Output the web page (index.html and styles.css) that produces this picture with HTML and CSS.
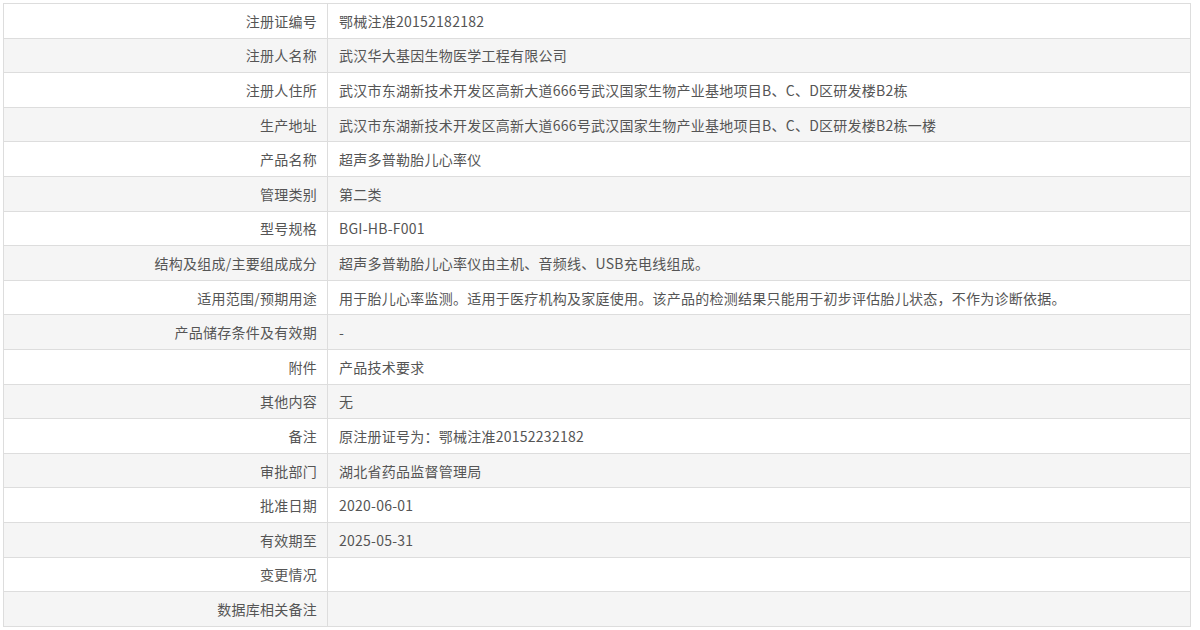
FILE: index.html
```html
<!DOCTYPE html>
<html lang="zh-CN">
<head>
<meta charset="utf-8">
<link rel="stylesheet" href="styles.css">
</head>
<body>
<table class="info">
<tbody>
<tr><td class="lbl">注册证编号</td><td class="val">鄂械注准20152182182</td></tr>
<tr><td class="lbl">注册人名称</td><td class="val">武汉华大基因生物医学工程有限公司</td></tr>
<tr><td class="lbl">注册人住所</td><td class="val">武汉市东湖新技术开发区高新大道666号武汉国家生物产业基地项目B、C、D区研发楼B2栋</td></tr>
<tr><td class="lbl">生产地址</td><td class="val">武汉市东湖新技术开发区高新大道666号武汉国家生物产业基地项目B、C、D区研发楼B2栋一楼</td></tr>
<tr><td class="lbl">产品名称</td><td class="val">超声多普勒胎儿心率仪</td></tr>
<tr><td class="lbl">管理类别</td><td class="val">第二类</td></tr>
<tr><td class="lbl">型号规格</td><td class="val">BGI-HB-F001</td></tr>
<tr><td class="lbl">结构及组成/主要组成成分</td><td class="val">超声多普勒胎儿心率仪由主机、音频线、USB充电线组成。</td></tr>
<tr><td class="lbl">适用范围/预期用途</td><td class="val">用于胎儿心率监测。适用于医疗机构及家庭使用。该产品的检测结果只能用于初步评估胎儿状态，不作为诊断依据。</td></tr>
<tr><td class="lbl">产品储存条件及有效期</td><td class="val">-</td></tr>
<tr><td class="lbl">附件</td><td class="val">产品技术要求</td></tr>
<tr><td class="lbl">其他内容</td><td class="val">无</td></tr>
<tr><td class="lbl">备注</td><td class="val">原注册证号为：鄂械注准20152232182</td></tr>
<tr><td class="lbl">审批部门</td><td class="val">湖北省药品监督管理局</td></tr>
<tr><td class="lbl">批准日期</td><td class="val">2020-06-01</td></tr>
<tr><td class="lbl">有效期至</td><td class="val">2025-05-31</td></tr>
<tr><td class="lbl">变更情况</td><td class="val"></td></tr>
<tr><td class="lbl">数据库相关备注</td><td class="val"></td></tr>
</tbody>
</table>
</body>
</html>
```

FILE: styles.css
```css
html, body {
  margin: 0;
  padding: 0;
  background: #fff;
}
body {
  padding: 3px 0 0 3px;
  font-family: "Microsoft YaHei", "Noto Sans CJK SC", "Noto Sans", sans-serif;
  font-size: 14px;
  color: #555;
}
.info {
  width: 1188px;
  border-collapse: collapse;
  border: 1px solid #ddd;
  table-layout: fixed;
}
.info tr:nth-child(even) {
  background: #f5f5f5;
}
.info td {
  border: 1px solid #ddd;
  height: 33.6px;
  padding: 0;
  line-height: 20px;
  white-space: nowrap;
  letter-spacing: 0.25px;
}
.info .lbl {
  width: 313px;
  text-align: right;
  padding-right: 10px;
}
.info .val {
  text-align: left;
  padding-left: 11px;
}
```
